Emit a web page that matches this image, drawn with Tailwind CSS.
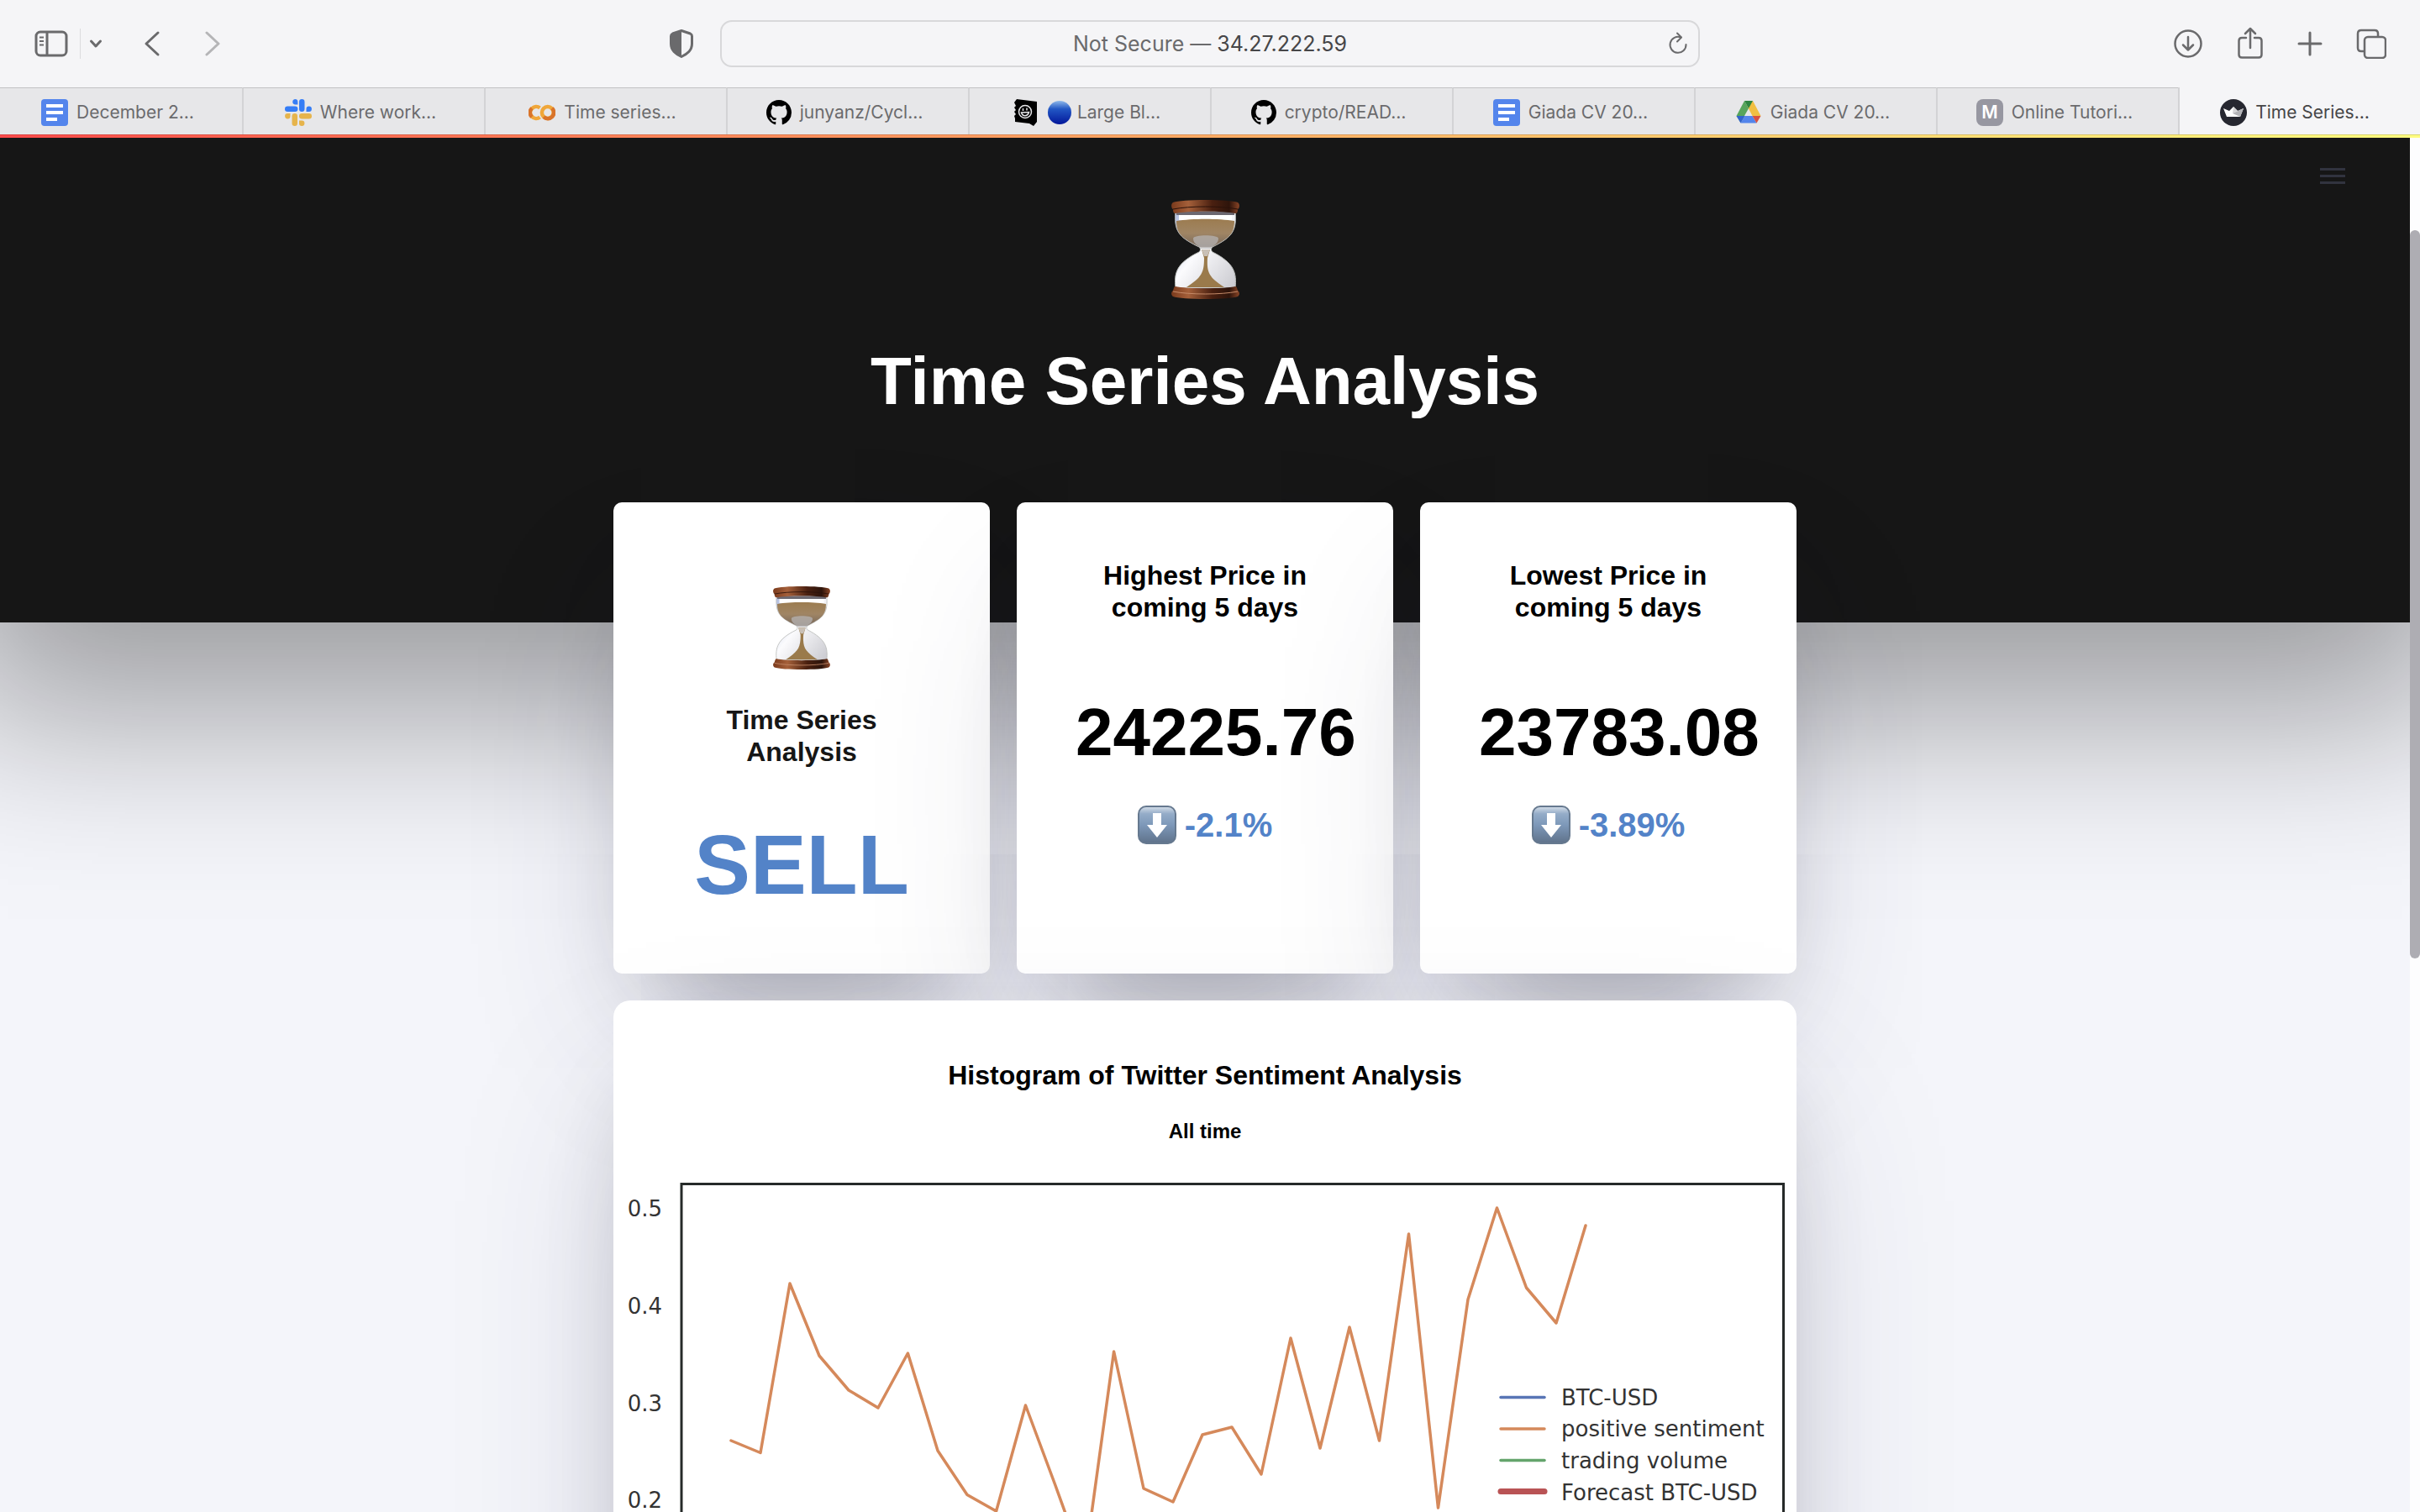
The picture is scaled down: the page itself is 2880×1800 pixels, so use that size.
<!DOCTYPE html>
<html lang="en">
<head>
<meta charset="utf-8">
<title>Time Series Analysis</title>
<script src="https://cdn.jsdelivr.net/npm/@tailwindcss/browser@4"></script>
</head>
<body class="flex h-screen flex-col overflow-hidden bg-[#f4f5fa] font-['Liberation_Sans',Arial,sans-serif]">

<!-- Shared artwork -->
<svg class="absolute size-0" aria-hidden="true">
  <defs>
    <linearGradient id="wood" x1="0" x2="1" y1="0" y2="0">
      <stop offset="0" stop-color="#7a3a1c"/><stop offset=".25" stop-color="#a5603a"/><stop offset=".6" stop-color="#4a2010"/><stop offset=".85" stop-color="#2e140b"/><stop offset="1" stop-color="#8a4526"/>
    </linearGradient>
    <linearGradient id="sand" x1="0" x2="0" y1="0" y2="1">
      <stop offset="0" stop-color="#9c7c50"/><stop offset=".5" stop-color="#a08564"/><stop offset="1" stop-color="#77685c"/>
    </linearGradient>
    <linearGradient id="glass" x1="0" x2="1" y1="0" y2="1">
      <stop offset="0" stop-color="#aebbe0"/><stop offset=".45" stop-color="#fbfbfd"/><stop offset="1" stop-color="#c9c9cf"/>
    </linearGradient>
    <linearGradient id="key" x1="0" x2="0" y1="0" y2="1">
      <stop offset="0" stop-color="#d6dfe9"/><stop offset=".2" stop-color="#94acc8"/><stop offset=".5" stop-color="#7d98b9"/><stop offset="1" stop-color="#5f728a"/>
    </linearGradient>
    <linearGradient id="ball" x1="0" x2="0" y1="0" y2="1">
      <stop offset="0" stop-color="#8fb9ea"/><stop offset=".35" stop-color="#2257c4"/><stop offset="1" stop-color="#03179a"/>
    </linearGradient>
  </defs>
  <symbol id="hourglass" viewBox="0 0 81 119">
    <path d="M5 14H76C78 38 73 45 49 57C47 59 47 61 49 63C75 76 78 88 76 106H5C3 88 6 76 33 63C35 61 35 59 33 57C8 45 3 38 5 14Z" fill="url(#glass)" stroke="#b9bcb9" stroke-width="1"/>
    <path d="M6 15H75V19H6Z" fill="#6c6870"/>
    <path d="M9 19H72V25H9Z" fill="#fff"/>
    <path d="M6 26C25 23 56 23 75 26C75 42 68 47 48 57H34C13 47 6 42 6 26Z" fill="url(#sand)"/>
    <path d="M26 47C26 42 56 42 56 47C56 54 49 55 47 59H35C33 55 26 54 26 47Z" fill="#b5b3b3" opacity=".75"/>
    <path d="M36 60H46L43 70C42 88 45 93 63 105H18C36 93 39 88 39 70Z" fill="#9a7a4b"/>
    <path d="M36 60H46L43 68H39Z" fill="#c9c0b6"/>
    <path d="M2 4C12 0 69 0 79 4C82 6 81 11 79 12C79 16 78 17 76 17C64 14 17 14 5 17C3 17 2 16 2 12C0 11-1 6 2 4Z" fill="url(#wood)"/>
    <path d="M2 12C22 8 59 8 79 12" stroke="#2c120a" fill="none"/>
    <path d="M5 104C17 107 64 107 76 104C78 104 78 106 79 109C81 110 82 114 79 116C69 120 12 120 2 116C-1 114 0 110 2 109C3 106 3 104 5 104Z" fill="url(#wood)"/>
    <path d="M2 110C22 114 59 114 79 110" stroke="#c48a68" fill="none"/>
  </symbol>
  <symbol id="down" viewBox="0 0 46 46">
    <rect x="1" y="1" width="44" height="44" rx="9" fill="url(#key)" stroke="#66798f" stroke-width="2"/>
    <path d="M18 9H28V23H35L23 38L11 23H18Z" fill="#fff"/>
  </symbol>
  <symbol id="github" viewBox="0 0 16 16">
    <path d="M8 0C3.58 0 0 3.58 0 8c0 3.54 2.29 6.53 5.47 7.59.4.07.55-.17.55-.38 0-.19-.01-.82-.01-1.49-2.01.37-2.53-.49-2.69-.94-.09-.23-.48-.94-.82-1.13-.28-.15-.68-.52-.01-.53.63-.01 1.08.58 1.23.82.72 1.21 1.87.87 2.33.66.07-.52.28-.87.51-1.07-1.78-.2-3.64-.89-3.64-3.95 0-.87.31-1.59.82-2.15-.08-.2-.36-1.02.08-2.12 0 0 .67-.21 2.2.82.64-.18 1.32-.27 2-.27s1.36.09 2 .27c1.53-1.04 2.2-.82 2.2-.82.44 1.1.16 1.92.08 2.12.51.56.82 1.27.82 2.15 0 3.07-1.87 3.75-3.65 3.95.29.25.54.73.54 1.48 0 1.07-.01 1.93-.01 2.2 0 .21.15.46.55.38A8.01 8.01 0 0 0 16 8c0-4.42-3.58-8-8-8z"/>
  </symbol>
  <symbol id="docs" viewBox="0 0 32 32">
    <rect width="32" height="32" rx="4" fill="#5485ec"/>
    <path d="M6 6H26V10H6ZM6 14H26V18H6ZM6 22H19V26H6Z" fill="#fff"/>
  </symbol>
</svg>

<!-- Browser toolbar -->
<div class="grid h-26 shrink-0 grid-cols-[1fr_40.5%_1fr] items-center bg-[#f5f5f7] text-[#6a6a6c]">
  <div class="flex items-center pr-8 pl-[41px]">
    <button aria-label="Show sidebar" class="flex"><svg class="h-8 w-10" viewBox="0 0 40 32" fill="none" stroke="currentColor" stroke-width="3"><rect x="2" y="2" width="36" height="28" rx="5"/><path d="M15 2V30"/><path d="M6 8.500H11M6 13H11M6 17.500H11" stroke-width="2"/></svg></button>
    <span class="ml-[14px] h-9 w-px bg-[#dcdcde]"></span>
    <button aria-label="Tab groups" class="ml-[10px] flex"><svg class="h-4 w-4" viewBox="0 0 16 16" fill="none" stroke="currentColor" stroke-width="3" stroke-linecap="round" stroke-linejoin="round"><path d="M2.500 5L8 11L13.500 5"/></svg></button>
    <button aria-label="Back" class="ml-[49px] flex"><svg class="h-8 w-5" viewBox="0 0 20 32" fill="none" stroke="currentColor" stroke-width="3" stroke-linecap="round" stroke-linejoin="round"><path d="M17 3L3 16L17 29"/></svg></button>
    <button aria-label="Forward" class="ml-[52px] flex text-[#b5b5b7]"><svg class="h-8 w-5" viewBox="0 0 20 32" fill="none" stroke="currentColor" stroke-width="3" stroke-linecap="round" stroke-linejoin="round"><path d="M3 3L17 16L3 29"/></svg></button>
    <button aria-label="Privacy report" class="ml-auto flex"><svg class="h-[34px] w-7" viewBox="0 0 28 34"><path d="M14 1.500L3.500 5Q1.500 6 1.500 8V17C1.500 25 7 29 14 32.500C21 29 26.500 25 26.500 17V8Q26.500 6 24.500 5Z" fill="none" stroke="currentColor" stroke-width="3" stroke-linejoin="round"/><path d="M14 1L2 6V17C2 25 7 29 14 32Z" fill="currentColor"/></svg></button>
  </div>
  <div class="relative flex h-14 items-center justify-center gap-[7px] rounded-[14px] border-2 border-[#d8d8da] font-[Inter,sans-serif] text-[25px] leading-8">
    <label for="address">Not Secure —</label>
    <input id="address" class="field-sizing-content text-[#464648] outline-none" value="34.27.222.59">
    <button aria-label="Reload" class="absolute right-3 flex"><svg class="h-7 w-6" viewBox="0 0 24 28" fill="none" stroke="currentColor" stroke-width="2" stroke-linecap="round" stroke-linejoin="round"><path d="M21.500 15A9.500 9.500 0 1 1 15.500 6.500"/><path d="M11 1.500L16 6.500L11 11.500"/></svg></button>
  </div>
  <div class="flex items-center justify-end pr-10">
    <button aria-label="Downloads" class="flex"><svg class="h-9 w-9" viewBox="0 0 36 36" fill="none" stroke="currentColor" stroke-width="2.500" stroke-linecap="round" stroke-linejoin="round"><circle cx="18" cy="18" r="15.500"/><path d="M18 10V25.500M12 19.500L18 25.500L24 19.500"/></svg></button>
    <button aria-label="Share" class="ml-10 flex"><svg class="h-10 w-8" viewBox="0 0 32 40" fill="none" stroke="currentColor" stroke-width="2.500" stroke-linecap="round" stroke-linejoin="round"><path d="M11 13H6Q2.500 13 2.500 16.500V33Q2.500 36.500 6 36.500H26Q29.500 36.500 29.500 33V16.500Q29.500 13 26 13H21"/><path d="M16 25V2M10 8L16 2L22 8"/></svg></button>
    <button aria-label="New tab" class="ml-10 flex"><svg class="h-8 w-[30px]" viewBox="0 0 30 32" fill="none" stroke="currentColor" stroke-width="3" stroke-linecap="round"><path d="M15 3V29M2 16H28"/></svg></button>
    <button aria-label="Tab overview" class="ml-10 flex"><svg class="h-9 w-9" viewBox="0 0 36 36" fill="none" stroke="currentColor" stroke-width="2.500" stroke-linejoin="round"><rect x="10" y="10" width="25" height="25" rx="4"/><path d="M10 27H6Q2 27 2 23V6Q2 2 6 2H22Q26 2 26 6V10"/></svg></button>
  </div>
</div>

<!-- Tabs -->
<nav class="grid h-14 shrink-0 grid-cols-10 font-[Inter,sans-serif] text-[21px] leading-7 whitespace-nowrap text-[#6b6b6d]">
  <a href="#" class="flex items-center justify-center gap-[10px] border-t border-t-[#c2c2c4] bg-[#e7e7e9] pt-[2px] pr-2"><svg class="size-8"><use href="#docs"/></svg>December 2…</a>
  <a href="#" class="flex items-center justify-center gap-[10px] border-t border-l-2 border-t-[#c2c2c4] border-l-[#d3d3d5] bg-[#e7e7e9] pt-[2px] pr-2"><svg class="size-8" viewBox="0 0 32 32"><g fill="#357df6"><path d="M12 0a3.400 3.400 0 0 1 3.400 3.400V6.500H12A3.300 3.300 0 0 1 12 0Z"/><rect y="8.500" width="15.400" height="6.500" rx="3.200"/><rect x="17" width="6.500" height="15" rx="3.200"/><path d="M25.500 15V11.800a3.200 3.200 0 1 1 3.200 3.200Z"/></g><g fill="#e6b44c"><path d="M6.500 17V20.200A3.200 3.200 0 1 1 3.200 17Z"/><rect x="8.500" y="17" width="6.500" height="15" rx="3.200"/><rect x="17" y="17" width="15" height="6.500" rx="3.200"/><path d="M17 25.500H20.200A3.200 3.200 0 1 1 17 28.700Z"/></g></svg>Where work…</a>
  <a href="#" class="flex items-center justify-center gap-[10px] border-t border-l-2 border-t-[#c2c2c4] border-l-[#d3d3d5] bg-[#e7e7e9] pt-[2px] pr-2"><svg class="size-8" viewBox="0 0 32 32" fill="none" stroke-width="4.500"><path d="M13.500 10.500A7 7 0 1 0 13.500 21.500" stroke="#f0a73a"/><path d="M4 10.800A7 7 0 0 0 4 21.200" stroke="#d9742b"/><circle cx="22.800" cy="16" r="6.900" stroke="#f0a73a"/><path d="M28 10.800A7 7 0 0 1 18 21.200" stroke="#d9742b"/></svg>Time series…</a>
  <a href="#" class="flex items-center justify-center gap-[10px] border-t border-l-2 border-t-[#c2c2c4] border-l-[#d3d3d5] bg-[#e7e7e9] pt-[2px] pr-2"><svg class="size-[30px] text-black"><use href="#github"/></svg>junyanz/Cycl…</a>
  <a href="#" class="flex items-center justify-center gap-[10px] border-t border-l-2 border-t-[#c2c2c4] border-l-[#d3d3d5] bg-[#e7e7e9] pt-[2px] pr-2"><svg class="h-8 w-8" viewBox="0 0 32 32"><path d="M5 0L29 3V27L25 32L20 29L3 27V23L2 20L4 18L2 15L4 13L2 10L4 8L2 4Z" fill="#000"/><g fill="none" stroke="#e7e7e9" stroke-width="1.500"><circle cx="15" cy="15" r="7.500"/><path d="M10.500 16C12 21 18 21 19.500 15.500ZM12.500 11V14M17 10.500V13.500"/></g></svg><span class="flex items-center gap-[7px]"><svg class="size-7" viewBox="0 0 28 28"><circle cx="14" cy="14" r="14" fill="url(#ball)"/></svg>Large Bl…</span></a>
  <a href="#" class="flex items-center justify-center gap-[10px] border-t border-l-2 border-t-[#c2c2c4] border-l-[#d3d3d5] bg-[#e7e7e9] pt-[2px] pr-2"><svg class="size-[30px] text-black"><use href="#github"/></svg>crypto/READ…</a>
  <a href="#" class="flex items-center justify-center gap-[10px] border-t border-l-2 border-t-[#c2c2c4] border-l-[#d3d3d5] bg-[#e7e7e9] pt-[2px] pr-2"><svg class="size-8"><use href="#docs"/></svg>Giada CV 20…</a>
  <a href="#" class="flex items-center justify-center gap-[10px] border-t border-l-2 border-t-[#c2c2c4] border-l-[#d3d3d5] bg-[#e7e7e9] pt-[2px] pr-2"><svg class="size-8" viewBox="0 0 32 32"><path d="M11 2L16 11L6.500 28L1.500 20Z" fill="#58a55c"/><path d="M21 2L30.500 20H20.500L14 7.500Z" fill="#f1bf42"/><path d="M11 2H21L16 11Z" fill="#2f8540"/><path d="M11.500 20H20.500L25.500 28.500H6.500Z" fill="#5485ec"/><path d="M1.500 20H11.500L6.500 28.500Z" fill="#3364cd"/><path d="M20.500 20H30.500L25.500 28.500Z" fill="#d9503f"/></svg>Giada CV 20…</a>
  <a href="#" class="flex items-center justify-center gap-[10px] border-t border-l-2 border-t-[#c2c2c4] border-l-[#d3d3d5] bg-[#e7e7e9] pt-[2px] pr-2"><span class="flex size-8 items-center justify-center rounded-lg bg-[#9797a1] font-semibold text-white">M</span>Online Tutori…</a>
  <a href="#" aria-current="page" class="flex items-center justify-center gap-[10px] border-l-2 border-l-[#d3d3d5] bg-[#f5f5f7] pt-[3px] pr-3 text-[#464648]"><svg class="size-8" viewBox="0 0 32 32"><circle cx="16" cy="16" r="16" fill="#262730"/><path d="M4 11L11 14L16 9L21 14L28 11L24 21H8Z" fill="#fff"/><path d="M16 9L21 14L15 17Z" fill="#d5d5d7"/><path d="M15 17L28 11L24 21Z" fill="#b3b3b7"/></svg>Time Series…</a>
</nav>

<div class="h-1 shrink-0 border-t border-black/15 bg-linear-to-r from-[#ff4b4b] to-[#fffd80]"></div>

<!-- Page -->
<div class="flex min-h-0 flex-1">
  <div class="relative min-w-0 flex-1 overflow-hidden">
    <button aria-label="Menu" class="absolute top-9 right-[77px] flex flex-col gap-[5px]"><span class="h-[3px] w-[30px] bg-[#31333f]"></span><span class="h-[3px] w-[30px] bg-[#31333f]"></span><span class="h-[3px] w-[30px] bg-[#31333f]"></span></button>

    <header class="flex flex-col items-center bg-[#161616] pt-[73px] pb-[239px] shadow-[0_50px_200px_60px_rgba(0,0,0,0.36)]">
      <svg class="h-[119px] w-[81px]"><use href="#hourglass"/></svg>
      <h1 class="mt-[50px] text-[80px] leading-24 font-bold text-white">Time Series Analysis</h1>
    </header>

    <main class="mx-auto -mt-[143px] grid max-w-[1408px] grid-cols-3 gap-8 text-center font-bold text-black">
      <section class="rounded-[10px] bg-white px-[70px] pt-[99px] pb-[70px] shadow-[0_100px_200px_-40px_rgba(50,50,93,0.25),0_60px_120px_-60px_rgba(0,0,0,0.3)]">
        <svg class="mx-auto h-[100px] w-[68px]"><use href="#hourglass"/></svg>
        <h2 class="mt-[41px] text-[32px] leading-[38px] text-[#161616]">Time Series Analysis</h2>
        <p class="mt-[55px] text-[100px] leading-[120px] text-[#5383c8]">SELL</p>
      </section>
      <section class="rounded-[10px] bg-white px-[70px] pt-[68px] shadow-[0_100px_200px_-40px_rgba(50,50,93,0.25),0_60px_120px_-60px_rgba(0,0,0,0.3)]">
        <h2 class="text-[32px] leading-[38px]">Highest Price in coming 5 days</h2>
        <p class="mt-[82px] text-[80px] leading-24 whitespace-nowrap">24225.76</p>
        <p class="mt-[38px] flex items-center justify-center gap-[10px] text-[40px] leading-12 text-[#5383c8]"><svg class="size-[46px]"><use href="#down"/></svg>-2.1%</p>
      </section>
      <section class="rounded-[10px] bg-white px-[70px] pt-[68px] shadow-[0_100px_200px_-40px_rgba(50,50,93,0.25),0_60px_120px_-60px_rgba(0,0,0,0.3)]">
        <h2 class="text-[32px] leading-[38px]">Lowest Price in coming 5 days</h2>
        <p class="mt-[82px] text-[80px] leading-24 whitespace-nowrap">23783.08</p>
        <p class="mt-[38px] flex items-center justify-center gap-[10px] text-[40px] leading-12 text-[#5383c8]"><svg class="size-[46px]"><use href="#down"/></svg>-3.89%</p>
      </section>
      <section class="col-span-3 rounded-[20px] bg-white pt-[70px] shadow-[0_100px_200px_-40px_rgba(50,50,93,0.25),0_60px_120px_-60px_rgba(0,0,0,0.3)]">
        <h2 class="text-[32px] leading-[38px]">Histogram of Twitter Sentiment Analysis</h2>
        <p class="mt-[34px] text-2xl leading-7">All time</p>
        <svg class="w-full font-['DejaVu_Sans',sans-serif] text-[26px] font-normal" viewBox="730 1361 1408 900" fill="none">
          <rect x="811" y="1409.500" width="1311.500" height="760" stroke="#262a29" stroke-width="3"/>
          <g fill="#333" text-anchor="end">
            <text x="788" y="1448">0.5</text><text x="788" y="1564">0.4</text><text x="788" y="1680">0.3</text><text x="788" y="1795">0.2</text>
          </g>
          <polyline stroke="#d5895b" stroke-width="3.500" stroke-linejoin="round" stroke-linecap="round" points="870,1715 905,1729.500 940,1528 975,1614 1010,1655 1045,1676 1080.400,1611 1116,1727 1151,1779.500 1185.600,1799 1220.500,1673 1255.500,1767 1290.500,1864 1325.600,1609 1361,1772 1396,1788 1431,1708 1466,1699 1501,1755 1536,1593 1571,1724 1606,1580 1641.500,1715 1676.500,1469 1711.500,1795 1747,1547 1781.500,1438 1816.500,1533 1852,1575 1887,1459"/>
          <g stroke-width="3.500" stroke-linecap="round">
            <path d="M1786 1663.500H1838" stroke="#5875b5"/>
            <path d="M1786 1701H1838" stroke="#d5895b"/>
            <path d="M1786 1738.500H1838" stroke="#64a46c"/>
            <path d="M1786 1775.500H1838" stroke="#b95355" stroke-width="7"/>
          </g>
          <g fill="#333">
            <text x="1858" y="1673">BTC-USD</text><text x="1858" y="1710">positive sentiment</text><text x="1858" y="1748">trading volume</text><text x="1858" y="1786">Forecast BTC-USD</text>
          </g>
        </svg>
      </section>
    </main>
  </div>
  <div class="w-3 shrink-0 bg-[#fdfdfe] pt-[110px]"><div class="h-[867px] rounded-full bg-[#aeadb3]"></div></div>
</div>
</body>
</html>
